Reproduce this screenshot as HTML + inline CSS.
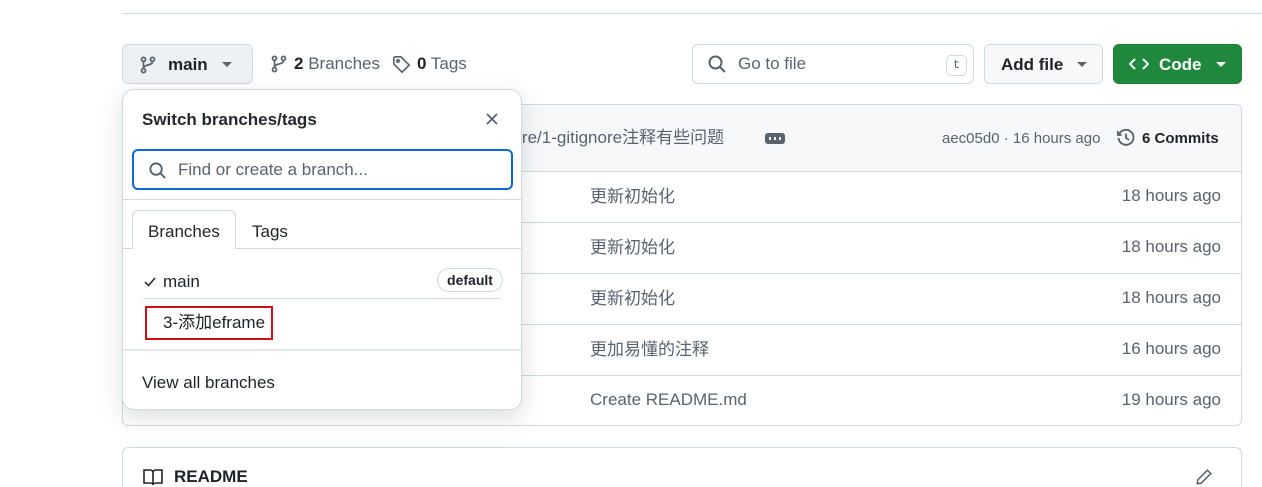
<!DOCTYPE html>
<html><head><meta charset="utf-8"><style>
*{box-sizing:border-box;margin:0;padding:0}
html,body{width:1262px;height:487px;overflow:hidden}
body{background:#fff;font-family:"Liberation Sans","Noto Sans CJK SC",sans-serif;color:#1f2328;position:relative}
.a{position:absolute}
.btn{position:absolute;border:1px solid #d1d9e0;border-radius:6px;background:#f6f8fa;display:flex;align-items:center;font-size:17px;font-weight:bold}
.row{position:absolute;left:0;right:0;height:51px;border-top:1px solid #d1d9e0;font-size:17px;color:#59636e}
.row .m{position:absolute;left:467px;top:10px}
.row .t{position:absolute;right:20px;top:14px}
svg{display:block}
</style></head><body>
<div class="a" style="left:122px;top:13px;width:1140px;height:1px;background:#d1d9e0"></div>

<div class="btn" style="left:122px;top:44px;width:131px;height:40px;background:#eef1f4">
<svg class="a" style="left:16px;top:11px" width="18" height="18" viewBox="0 0 16 16" fill="none" stroke="#59636e" stroke-width="1.5"><circle cx="4" cy="3" r="1.8"/><circle cx="4" cy="13" r="1.8"/><circle cx="12" cy="3" r="1.8"/><path d="M4 5v6M12 5c0 4-8 2-8 6"/></svg>
<span class="a" style="left:45px;top:10px">main</span>
<svg class="a" style="left:99px;top:17px" width="10" height="6"><path d="M0 0h10L5 5z" fill="#59636e"/></svg>
</div>
<svg class="a" style="left:270px;top:55px" width="18" height="18" viewBox="0 0 16 16" fill="none" stroke="#59636e" stroke-width="1.5"><circle cx="4" cy="3" r="1.8"/><circle cx="4" cy="13" r="1.8"/><circle cx="12" cy="3" r="1.8"/><path d="M4 5v6M12 5c0 4-8 2-8 6"/></svg>
<div class="a" style="left:294px;top:54px;font-size:17px;color:#59636e"><b style="color:#1f2328">2</b> Branches</div>
<svg class="a" style="left:392px;top:55px" width="19" height="19" viewBox="0 0 16 16" fill="none" stroke="#59636e" stroke-width="1.4"><path d="M1.5 2.5v5l7 7 6-6-7-7h-5z"/><circle cx="5" cy="5" r="1"/></svg>
<div class="a" style="left:417px;top:54px;font-size:17px;color:#59636e"><b style="color:#1f2328">0</b> Tags</div>

<div class="a" style="left:692px;top:44px;width:282px;height:40px;border:1px solid #d1d9e0;border-radius:6px"></div>
<svg class="a" style="left:707px;top:54px" width="20" height="20" viewBox="0 0 20 20" fill="none" stroke="#59636e" stroke-width="2"><circle cx="8.5" cy="8.5" r="6"/><path d="M13 13l5 5"/></svg>
<div class="a" style="left:738px;top:54px;font-size:17px;color:#59636e">Go to file</div>
<div class="a" style="left:946px;top:55px;width:21px;height:21px;border:1px solid #d1d9e0;border-radius:5px;font-family:'Liberation Mono',monospace;font-size:12px;text-align:center;line-height:19px;color:#59636e">t</div>

<div class="btn" style="left:984px;top:44px;width:119px;height:40px"><span class="a" style="left:16px;top:10px">Add file</span><svg class="a" style="left:92px;top:17px" width="10" height="6"><path d="M0 0h10L5 5z" fill="#59636e"/></svg></div>
<div class="btn" style="left:1113px;top:44px;width:129px;height:40px;background:#1f883d;border-color:#1a7f37;color:#fff">
<svg class="a" style="left:15px;top:12px" width="20" height="14" viewBox="0 0 20 14" fill="none" stroke="#fff" stroke-width="2"><path d="M6 2L1 7l5 5M14 2l5 5-5 5"/></svg>
<span class="a" style="left:45px;top:10px">Code</span>
<svg class="a" style="left:102px;top:17px" width="10" height="6"><path d="M0 0h10L5 5z" fill="#fff"/></svg></div>

<div class="a" style="left:122px;top:104px;width:1120px;height:322px;border:1px solid #d1d9e0;border-radius:6px;overflow:hidden">
<div class="a" style="left:0;top:0;right:0;height:66px;background:#f6f8fa">
<div class="a" style="left:380px;top:18px;font-size:17px;color:#59636e">nore/1-gitignore注释有些问题</div>
<div class="a" style="left:642px;top:28px;width:20px;height:11px;background:#59636e;border-radius:3px"><span style="position:absolute;left:4px;top:4px;width:12px;height:3px;background:repeating-linear-gradient(90deg,#fff 0 2px,transparent 2px 5px)"></span></div>
<div class="a" style="left:819px;top:25px;font-size:15px;color:#59636e">aec05d0 · 16 hours ago</div>
<svg class="a" style="left:993px;top:23px" width="20" height="20" viewBox="0 0 16 16" fill="none" stroke="#59636e" stroke-width="1.5"><path d="M2.5 5A6 6 0 1 1 2 8"/><path d="M1.5 2.5V5.5H4.5"/><path d="M8 4.5V8l2.5 1.5"/></svg>
<div class="a" style="left:1019px;top:25px;font-size:15px;font-weight:bold">6 Commits</div>
</div>
<div class="row" style="top:66px"><span class="m">更新初始化</span><span class="t">18 hours ago</span></div>
<div class="row" style="top:117px"><span class="m">更新初始化</span><span class="t">18 hours ago</span></div>
<div class="row" style="top:168px"><span class="m">更新初始化</span><span class="t">18 hours ago</span></div>
<div class="row" style="top:219px"><span class="m">更加易懂的注释</span><span class="t">16 hours ago</span></div>
<div class="row" style="top:270px"><span class="m" style="top:14px">Create README.md</span><span class="t">19 hours ago</span></div>
</div>

<div class="a" style="left:122px;top:447px;width:1120px;height:60px;border:1px solid #d1d9e0;border-radius:6px">
<svg class="a" style="left:20px;top:20px" width="20" height="18" viewBox="0 0 20 18" fill="none" stroke="#1f2328" stroke-width="1.6"><path d="M1 2h6c2 0 3 1 3 3v12c0-1-1-2-3-2H1zM19 2h-6c-2 0-3 1-3 3v12c0-1 1-2 3-2h6z"/></svg>
<div class="a" style="left:51px;top:19px;font-size:17px;font-weight:bold">README</div>
<svg class="a" style="left:1072px;top:20px" width="18" height="18" viewBox="0 0 16 16" fill="none" stroke="#59636e" stroke-width="1.4"><path d="M11 2l3 3-8.5 8.5L2 14l.5-3.5z"/></svg>
</div>

<div class="a" style="left:122px;top:89px;width:400px;height:321px;background:#fff;border:1px solid #d1d9e0;border-radius:12px;box-shadow:0 8px 24px rgba(66,74,83,.18)">
<div class="a" style="left:19px;top:20px;font-size:17px;font-weight:bold;color:#25292e">Switch branches/tags</div>
<svg class="a" style="left:363px;top:23px" width="12" height="12" viewBox="0 0 12 12" stroke="#59636e" stroke-width="1.8"><path d="M1 1l10 10M11 1L1 11"/></svg>
<div class="a" style="left:9px;top:59px;width:381px;height:41px;border:2px solid #0969da;border-radius:6px"></div>
<svg class="a" style="left:25px;top:71px" width="19" height="19" viewBox="0 0 20 20" fill="none" stroke="#59636e" stroke-width="2"><circle cx="8.5" cy="8.5" r="6"/><path d="M13 13l5 5"/></svg>
<div class="a" style="left:55px;top:70px;font-size:17px;color:#59636e">Find or create a branch...</div>
<div class="a" style="left:0;right:0;top:109px;height:1px;background:#d1d9e0"></div>
<div class="a" style="left:0;right:0;top:158px;height:1px;background:#d1d9e0"></div>
<div class="a" style="left:9px;top:120px;width:104px;height:39px;border:1px solid #d1d9e0;border-bottom:none;border-radius:6px 6px 0 0;background:#fff"></div>
<div class="a" style="left:25px;top:132px;font-size:17px">Branches</div>
<div class="a" style="left:129px;top:132px;font-size:17px">Tags</div>
<svg class="a" style="left:21px;top:187px" width="12" height="10" viewBox="0 0 12 10" fill="none" stroke="#1f2328" stroke-width="1.5"><path d="M1 5l3.5 3.5L11 1"/></svg>
<div class="a" style="left:40px;top:182px;font-size:17px">main</div>
<div class="a" style="left:314px;top:178px;width:66px;height:24px;border:1px solid #d1d9e0;border-radius:12px;font-size:14px;font-weight:bold;text-align:center;line-height:22px;color:#1f2328">default</div>
<div class="a" style="left:20px;right:20px;top:208px;height:1px;background:#d1d9e0"></div>
<div class="a" style="left:22px;top:216px;width:128px;height:34px;border:2px solid #d0111b"></div>
<div class="a" style="left:40px;top:218px;font-size:17px">3-添加eframe</div>
<div class="a" style="left:0;right:0;top:259px;height:2px;background:#e4e8ec"></div>
<div class="a" style="left:19px;top:283px;font-size:17px">View all branches</div>
</div>
</body></html>
